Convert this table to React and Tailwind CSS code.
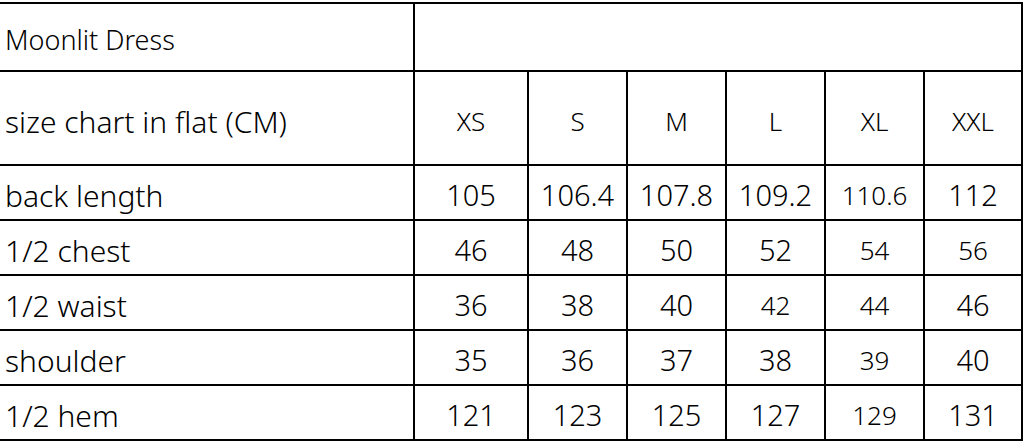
const cols = ['w-[415px]', 'w-[114px]', 'w-[99px]', 'w-[99px]', 'w-[99px]', 'w-[99px]', 'w-[98px]'];

// "s" marks a value set in the smaller face, as in the source sheet
const rows = [
  ['back length', '105', '106.4', '107.8', '109.2', ['110.6', 's'], '112'],
  ['1/2 chest', '46', '48', '50', '52', ['54', 's'], ['56', 's']],
  ['1/2 waist', '36', '38', '40', ['42', 's'], ['44', 's'], '46'],
  ['shoulder', '35', '36', '37', '38', ['39', 's'], '40'],
  ['1/2 hem', '121', '123', '125', '127', ['129', 's'], '131'],
];

const sizes = ['XS', 'S', 'M', 'L', 'XL', 'XXL'];

function Cell({ width, className = '', children }) {
  return (
    <div className={`${width} shrink-0 border-r-2 border-b-2 border-black flex items-center ${className}`}>
      {children}
    </div>
  );
}

export default function App() {
  return (
    <div
      className="w-[1023px] h-[441px] bg-white text-black overflow-hidden font-light"
      style={{ fontFamily: '"Noto Sans", "Liberation Sans", sans-serif' }}
    >
      <div className="mt-[2px] border-t-2 border-black flex flex-col">
        <div className="flex h-[68px]">
          <Cell width={cols[0]} className="pl-[5px] pt-[6px] text-[27px]">Moonlit Dress</Cell>
          <Cell width="w-[608px]" />
        </div>
        <div className="flex h-[94px]">
          <Cell width={cols[0]} className="pl-[5px] pt-[7px] text-[30px]">size chart in flat (CM)</Cell>
          {sizes.map((s, i) => (
            <Cell key={s} width={cols[i + 1]} className="justify-center pt-[6px] text-[26px]">{s}</Cell>
          ))}
        </div>
        {rows.map((row) => (
          <div key={row[0]} className="flex h-[55px]">
            <Cell width={cols[0]} className="pl-[5px] pt-[5px] text-[30px]">{row[0]}</Cell>
            {row.slice(1).map((v, i) => {
              const small = Array.isArray(v);
              const text = small ? v[0] : v;
              return (
                <Cell
                  key={i}
                  width={cols[i + 1]}
                  className={`justify-center pt-[5px] ${small ? 'text-[26px]' : 'text-[29px]'}`}
                >
                  {text}
                </Cell>
              );
            })}
          </div>
        ))}
      </div>
    </div>
  );
}
